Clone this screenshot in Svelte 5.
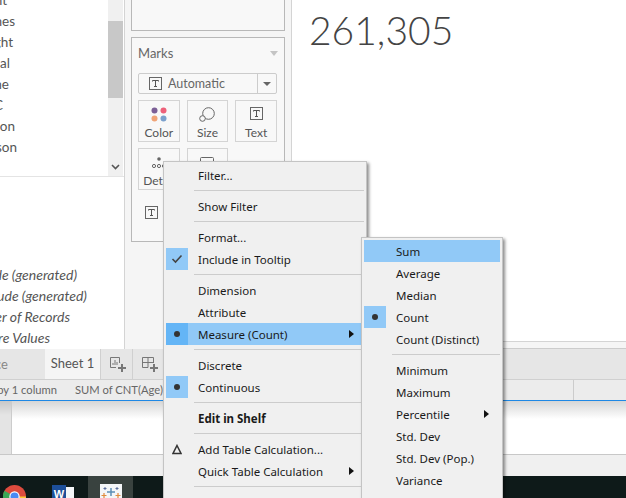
<script>
	const upperFields = [
		{ name: 'Event', end: 7 },
		{ name: 'Games', end: 15 },
		{ name: 'Height', end: 13 },
		{ name: 'Medal', end: 10 },
		{ name: 'Name', end: 9 },
		{ name: 'NOC', end: 3 },
		{ name: 'Region', end: 15 },
		{ name: 'Season', end: 17 }
	];
	const lowerFields = [
		{ name: 'Latitude (generated)', end: 77 },
		{ name: 'Longitude (generated)', end: 87 },
		{ name: 'Number of Records', end: 70 },
		{ name: 'Measure Values', end: 50 }
	];

	const mainMenu = [
		{ label: 'Filter...' },
		{ sep: true },
		{ label: 'Show Filter' },
		{ sep: true },
		{ label: 'Format...' },
		{ label: 'Include in Tooltip', mark: 'check' },
		{ sep: true },
		{ label: 'Dimension' },
		{ label: 'Attribute' },
		{ label: 'Measure (Count)', mark: 'dot', active: true, arrow: true },
		{ sep: true },
		{ label: 'Discrete' },
		{ label: 'Continuous', mark: 'dot' },
		{ sep: true },
		{ label: 'Edit in Shelf', bold: true },
		{ sep: true },
		{ label: 'Add Table Calculation...', mark: 'delta' },
		{ label: 'Quick Table Calculation', arrow: true },
		{ sep: true }
	];
	const subMenu = [
		{ label: 'Sum', active: true },
		{ label: 'Average' },
		{ label: 'Median' },
		{ label: 'Count', mark: 'dot' },
		{ label: 'Count (Distinct)' },
		{ sep: true },
		{ label: 'Minimum' },
		{ label: 'Maximum' },
		{ label: 'Percentile', arrow: true },
		{ label: 'Std. Dev' },
		{ label: 'Std. Dev (Pop.)' },
		{ label: 'Variance' }
	];
</script>

{#snippet textIcon()}
	<svg class="t-icon" width="13" height="13" viewBox="0 0 13 13">
		<rect x="0.5" y="0.5" width="12" height="12" fill="none" stroke="#666" />
		<path d="M3.5 4.5V3.5H9.5V4.5M6.5 3.5V9.5M5 9.5H8" fill="none" stroke="#555" />
	</svg>
{/snippet}

{#snippet menuRows(rows)}
	{#each rows as row}
		{#if row.sep}
			<div class="sep"></div>
		{:else}
			<div class="row" class:active={row.active} class:bold={row.bold}>
				<span class="mark" class:on={row.mark === 'check' || row.mark === 'dot'}>
					{#if row.mark === 'check'}
						<svg width="12" height="10" viewBox="0 0 12 10"><path d="M1.5 5L4.5 8L10.5 1.5" fill="none" stroke="#444" stroke-width="1.6" /></svg>
					{:else if row.mark === 'dot'}
						<svg width="8" height="8" viewBox="0 0 8 8"><circle cx="4" cy="4" r="3" fill="#333" /></svg>
					{:else if row.mark === 'delta'}
						<svg width="10" height="11" viewBox="0 0 10 11"><path d="M5 1.5L9 9.5H1Z" fill="none" stroke="#333" stroke-width="1.5" /></svg>
					{/if}
				</span>
				<span class="label">{row.label}</span>
				{#if row.arrow}
					<svg class="arrow" width="5" height="8" viewBox="0 0 5 8"><path d="M0 0L5 4L0 8Z" fill="#111" /></svg>
				{/if}
			</div>
		{/if}
	{/each}
{/snippet}

<div class="screen">
	<div class="workspace">
		<div class="data-pane">
			<div class="upper">
				<ul class="fields">
					{#each upperFields as field}
						<li style:width="{field.end}px"><span>{field.name}</span></li>
					{/each}
				</ul>
				<div class="scrollbar">
					<div class="thumb"></div>
					<svg class="chevron" width="9" height="6" viewBox="0 0 9 6"><path d="M1 1L4.5 4.5L8 1" fill="none" stroke="#555" stroke-width="1.6" /></svg>
				</div>
			</div>
			<ul class="fields lower">
				{#each lowerFields as field}
					<li style:width="{field.end}px"><span>{field.name}</span></li>
				{/each}
			</ul>
		</div>

		<div class="shelves">
			<div class="card filters"></div>
			<div class="card marks">
				<div class="marks-head">
					<span>Marks</span>
					<svg width="8" height="5" viewBox="0 0 8 5"><path d="M0 0H8L4 5Z" fill="#c4c4c4" /></svg>
				</div>
				<div class="mark-type">
					{@render textIcon()}
					<span class="mark-name">Automatic</span>
					<span class="mark-drop"><svg width="8" height="4" viewBox="0 0 8 4"><path d="M0 0H8L4 4Z" fill="#666" /></svg></span>
				</div>
				<div class="mark-grid">
					<div class="mark-btn">
						<svg width="16" height="15" viewBox="0 0 16 15">
							<circle cx="3.5" cy="3.5" r="3" fill="#7b5f96" />
							<circle cx="12.5" cy="3.5" r="3" fill="#ed6079" />
							<circle cx="3.5" cy="11.5" r="3" fill="#f0a477" />
							<circle cx="12.5" cy="11.5" r="3" fill="#7ba0cc" />
						</svg>
						<span>Color</span>
					</div>
					<div class="mark-btn">
						<svg width="16" height="15" viewBox="0 0 16 15">
							<circle cx="9.5" cy="6.5" r="5.8" fill="none" stroke="#666" />
							<circle cx="3.5" cy="11.5" r="2.8" fill="#f8f8f8" stroke="#666" />
						</svg>
						<span>Size</span>
					</div>
					<div class="mark-btn">
						{@render textIcon()}
						<span>Text</span>
					</div>
					<div class="mark-btn">
						<svg width="14" height="15" viewBox="0 0 14 15">
							<circle cx="7" cy="4" r="1.8" fill="#666" />
							<circle cx="2" cy="11" r="1.6" fill="none" stroke="#666" />
							<circle cx="7" cy="11" r="1.6" fill="none" stroke="#666" />
							<circle cx="12" cy="11" r="1.6" fill="none" stroke="#666" />
						</svg>
						<span>Detail</span>
					</div>
					<div class="mark-btn">
						<svg width="14" height="15" viewBox="0 0 14 15"><rect x="0.5" y="2.5" width="13" height="9" rx="1" fill="none" stroke="#666" /></svg>
						<span>Tooltip</span>
					</div>
				</div>
				<div class="mark-pill">{@render textIcon()}</div>
			</div>
		</div>

		<div class="view">
			<div class="canvas">
				<div class="big-number">261,305</div>
			</div>
			<div class="canvas-foot"></div>
		</div>
	</div>

	<div class="tabs">
		<div class="tab source"><span>Data Source</span></div>
		<div class="tab sheet">Sheet 1</div>
		<div class="tab add">
			<svg width="16" height="15" viewBox="0 0 16 15">
				<path d="M9.5 6V0.5H0.5V10.5H6" fill="none" stroke="#777" />
				<path d="M3 8V6M5 8V3M7 8V5" fill="none" stroke="#777" />
				<path d="M12 7V15M8 11H16" fill="none" stroke="#777" stroke-width="2" />
			</svg>
		</div>
		<div class="tab add">
			<svg width="16" height="15" viewBox="0 0 16 15">
				<path d="M11.5 6V0.5H0.5V10.5H6M0.5 5.5H11.5M6 0.5V10.5" fill="none" stroke="#777" />
				<path d="M12 7V15M8 11H16" fill="none" stroke="#777" stroke-width="2" />
			</svg>
		</div>
	</div>

	<div class="status">
		<div class="status-left"><span>1 row by 1 column</span></div>
		<div class="status-sum">SUM of CNT(Age): 261,305</div>
		<div class="status-end"></div>
	</div>

	<div class="lower-window">
		<div class="strip"></div>
		<div class="blank"></div>
	</div>
	<div class="window-foot"></div>

	<div class="taskbar">
		<svg class="chrome" width="23" height="23" viewBox="0 0 24 24">
			<circle cx="12" cy="12" r="12" fill="#dd4b3e" />
			<path d="M12 12L1.6 6A12 12 0 0 0 12 24L18 13.5Z" fill="#3aa757" />
			<path d="M12 12H24A12 12 0 0 1 12 24Z" fill="#fcc934" />
			<circle cx="12" cy="12" r="5.4" fill="#fff" />
			<circle cx="12" cy="12" r="4.2" fill="#4a8af4" />
		</svg>
		<div class="word">
			<span class="word-doc"></span>
			<span class="word-w">W</span>
		</div>
		<div class="tableau-slot">
			<svg width="22" height="22" viewBox="0 0 22 22">
				<rect width="22" height="22" fill="#f4f6f8" />
				<path d="M11 4V12M7 8H15" stroke="#5b8fb5" stroke-width="1.5" />
				<path d="M4 9V14M1.5 11.5H6.5M18 9V14M15.5 11.5H20.5" stroke="#e08a3c" stroke-width="1.2" />
				<path d="M11 15V22M8 18.5H14" stroke="#c8404a" stroke-width="1.3" />
				<path d="M5 3V6M3.5 4.5H6.5M17 3V6M15.5 4.5H18.5" stroke="#5c6f9c" stroke-width="1" />
			</svg>
		</div>
	</div>

	<div class="menu main-menu">{@render menuRows(mainMenu)}</div>
	<div class="menu sub-menu">{@render menuRows(subMenu)}</div>
</div>

<style>
	:global(body) {
		margin: 0;
	}

	.screen {
		position: relative;
		display: flex;
		flex-direction: column;
		width: 626px;
		height: 498px;
		overflow: hidden;
		background: #f0f0f0;
		font-family: Lato, 'Open Sans', sans-serif;
		color: #555;
	}

	/* top part: data pane, shelves, view */
	.workspace {
		display: flex;
		height: 349px;
		flex: none;
	}

	.data-pane {
		display: flex;
		flex-direction: column;
		width: 124px;
		background: #fff;
		border-right: 1px solid #d4d4d4;
	}

	.upper {
		display: flex;
		justify-content: space-between;
		height: 176px;
		border-bottom: 1px solid #e4e4e4;
	}

	.fields {
		display: flex;
		flex-direction: column;
		margin: 0;
		padding: 0;
		list-style: none;
		font-size: 13.5px;
		color: #555;
	}

	.fields li {
		display: flex;
		justify-content: flex-end;
		height: 21px;
		line-height: 21px;
		white-space: nowrap;
	}

	.upper .fields {
		margin-top: -10px;
	}

	.lower {
		margin-top: 87px;
		font-size: 14px;
		font-style: italic;
	}

	.scrollbar {
		position: relative;
		width: 15px;
		margin-right: 1px;
		background: #f0f0f0;
	}

	.thumb {
		height: 77px;
		margin-top: 21px;
		background: #c8c8c8;
	}

	.chevron {
		position: absolute;
		left: 3px;
		bottom: 6px;
	}

	.shelves {
		display: flex;
		flex-direction: column;
		gap: 6px;
		width: 154px;
		padding: 0 6px;
		background: #f5f5f5;
		border-right: 1px solid #d4d4d4;
	}

	.card {
		background: #f8f8f8;
		border: 1px solid #b8b8b8;
	}

	.filters {
		height: 30px;
		border-top: none;
	}

	.marks {
		display: flex;
		flex-direction: column;
		height: 191px;
		padding: 6px 7px 6px 6px;
	}

	.marks-head {
		display: flex;
		justify-content: space-between;
		align-items: center;
		height: 18px;
		margin-bottom: 11px;
		font-size: 13px;
		color: #666;
	}

	.marks-head svg {
		margin-right: -1px;
	}

	.mark-type {
		display: flex;
		align-items: center;
		height: 19px;
		margin-bottom: 6px;
		padding-left: 10px;
		border: 1px solid #ccc;
		border-radius: 2px;
		font-size: 12.5px;
		color: #666;
	}

	.mark-name {
		flex: 1;
		margin-left: 6px;
	}

	.mark-drop {
		display: flex;
		align-items: center;
		justify-content: center;
		width: 18px;
		height: 100%;
		border-left: 1px solid #ccc;
	}

	.t-icon {
		flex: none;
	}

	.mark-grid {
		display: grid;
		grid-template-columns: repeat(3, 1fr);
		gap: 6px 7px;
	}

	.mark-btn {
		display: flex;
		flex-direction: column;
		align-items: center;
		height: 34px;
		padding: 6px 0 0;
		border: 1px solid #d4d4d4;
		font-size: 12px;
		color: #555;
		overflow: hidden;
	}

	.mark-btn svg {
		flex: none;
	}

	.mark-btn span {
		margin-top: auto;
		padding-bottom: 1px;
	}

	.mark-pill {
		margin: 13px 0 0 7px;
	}

	.view {
		display: flex;
		flex-direction: column;
		flex: 1;
	}

	.canvas {
		flex: 1;
		padding: 7px 0 0 17px;
		background: #fff;
		border-bottom: 1px solid #d4d4d4;
	}

	.big-number {
		font-size: 39px;
		font-weight: 300;
		line-height: 46px;
		color: #444;
	}

	.canvas-foot {
		height: 6px;
		background: #f5f5f5;
		border-bottom: 1px solid #ccc;
	}

	/* sheet tabs and status */
	.tabs {
		display: flex;
		flex: none;
		height: 30px;
		background: #e6e6e6;
		border-bottom: 1px solid #d0d0d0;
	}

	.tab {
		display: flex;
		align-items: center;
		justify-content: center;
		border-right: 1px solid #d0d0d0;
		white-space: nowrap;
	}

	.source {
		justify-content: flex-end;
		width: 45px;
		padding-right: 37px;
		box-sizing: border-box;
		border-right: none;
		font-size: 13px;
		color: #888;
	}

	.sheet {
		width: 56px;
		padding-bottom: 3px;
		box-sizing: border-box;
		background: #f5f5f5;
		font-size: 13px;
		color: #555;
	}

	.add {
		width: 31px;
	}

	.add svg {
		margin-left: 2px;
	}

	.status {
		display: flex;
		flex: none;
		height: 20px;
		background: #ececec;
		border-bottom: 1px solid #1e88e5;
		font-size: 11.2px;
		line-height: 20px;
		color: #666;
	}

	.status-left {
		display: flex;
		justify-content: flex-end;
		width: 57px;
		margin-right: 18px;
		white-space: nowrap;
	}

	.status-sum {
		flex: 1;
		white-space: nowrap;
	}

	.status-end {
		width: 52px;
		border-left: 1px solid #ccc;
	}

	.lower-window {
		display: flex;
		flex: none;
		height: 53px;
		border-bottom: 1px solid #c8c8c8;
	}

	.strip {
		width: 11px;
		background: linear-gradient(#c8c8c8, #e4e4e4 14px);
		border-right: 1px solid #ccc;
	}

	.blank {
		flex: 1;
		background: linear-gradient(#d6d6d6, #fff 18px);
	}

	.window-foot {
		flex: none;
		height: 21px;
		background: #f0f0f0;
	}

	.taskbar {
		position: relative;
		flex: 1;
		background: #0e1a19;
	}

	.chrome {
		position: absolute;
		left: 3px;
		top: 9px;
	}

	.word {
		position: absolute;
		left: 52px;
		top: 9px;
		width: 22px;
		height: 16px;
	}

	.word-doc {
		position: absolute;
		left: 7px;
		top: 2px;
		width: 15px;
		height: 20px;
		background: #f4f6f8;
	}

	.word-w {
		position: absolute;
		left: 0;
		top: 0;
		width: 14px;
		height: 22px;
		background: #1d4f99;
		font: bold 11px/18px 'Liberation Sans', sans-serif;
		text-align: center;
		color: #fff;
	}

	.tableau-slot {
		position: absolute;
		left: 88px;
		top: 0;
		width: 45px;
		height: 22px;
		padding: 8px 0 0 12px;
		box-sizing: border-box;
		background: #39423f;
	}

	/* context menus sit over everything */
	.menu {
		position: absolute;
		display: flex;
		flex-direction: column;
		height: 400px;
		padding: 2px;
		background: #f0f0f0;
		border: 1px solid #c4c4c4;
		box-shadow: 2px 2px 3px rgba(0, 0, 0, 0.45);
		font-family: 'Noto Sans', 'Open Sans', sans-serif;
		font-size: 11.5px;
		color: #1a1a1a;
	}

	.main-menu {
		left: 163px;
		top: 161px;
		width: 198px;
	}

	.sub-menu {
		left: 361px;
		top: 237px;
		width: 136px;
	}

	.row {
		position: relative;
		display: flex;
		align-items: center;
		flex: none;
		height: 22px;
		white-space: nowrap;
	}

	.row.active {
		background: #91c9f7;
	}

	.row.bold {
		font-weight: 700;
	}

	.mark {
		display: flex;
		align-items: center;
		justify-content: center;
		flex: none;
		width: 22px;
		height: 22px;
		margin-right: 10px;
	}

	.mark.on {
		background: #91c9f7;
	}

	.active .mark.on {
		background: #64b5f6;
	}

	.arrow {
		position: absolute;
		right: 10px;
		top: 7px;
	}

	.sub-menu .arrow {
		right: 11px;
	}

	.sep {
		flex: none;
		height: 1px;
		margin: 4px 0 4px 28px;
		background: #ccc;
	}
</style>
